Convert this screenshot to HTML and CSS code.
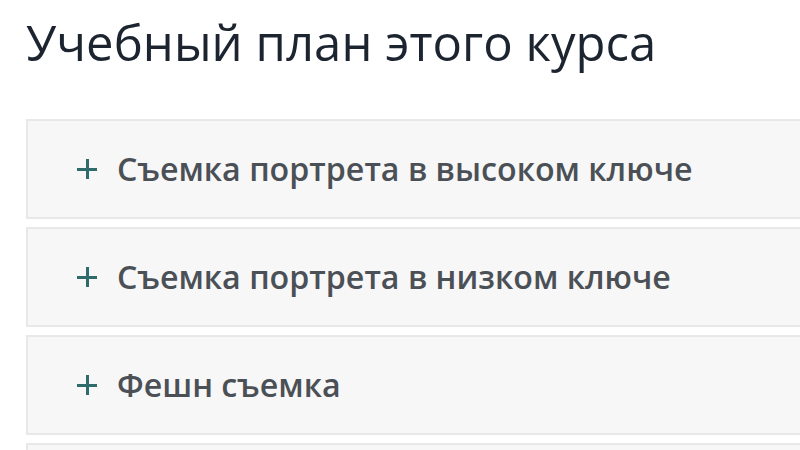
FILE: index.html
```html
<!DOCTYPE html>
<html lang="ru">
<head>
<meta charset="utf-8">
<link rel="stylesheet" href="styles.css">
</head>
<body>
<div class="page">
  <h1 class="title">Учебный план этого курса</h1>
  <div class="accordion">
    <div class="item"><span class="plus"></span><span class="label">Съемка портрета в высоком ключе</span></div>
    <div class="item"><span class="plus"></span><span class="label">Съемка портрета в низком ключе</span></div>
    <div class="item"><span class="plus"></span><span class="label">Фешн съемка</span></div>
    <div class="item"></div>
  </div>
</div>
</body>
</html>
```
FILE: styles.css
```css
html, body {
  margin: 0;
  padding: 0;
  background: #ffffff;
  overflow: hidden;
}
.page {
  width: 800px;
  height: 450px;
  overflow: hidden;
  padding: 0 0 0 26px;
  box-sizing: border-box;
  font-family: "Open Sans", "Noto Sans", sans-serif;
}
.title {
  margin: 0;
  padding-top: 12px;
  height: 119px;
  box-sizing: border-box;
  font-size: 49px;
  line-height: 60px;
  font-weight: 400;
  color: #1c2430;
  letter-spacing: 0.05px;
  white-space: nowrap;
}
.accordion {
  display: flex;
  flex-direction: column;
  gap: 8px;
  width: 820px;
}
.item {
  height: 100px;
  box-sizing: border-box;
  background: #f7f7f7;
  border: 2px solid #e8e8e8;
  display: flex;
  align-items: center;
  padding-left: 49px;
}
.plus {
  position: relative;
  width: 20px;
  height: 20px;
  margin-right: 20px;
  flex: none;
}
.plus::before, .plus::after {
  content: "";
  position: absolute;
  background: #2f6b6b;
}
.plus::before {
  left: 0; right: 0; top: 8.5px; height: 3px;
}
.plus::after {
  top: 0; bottom: 0; left: 8.5px; width: 3px;
}
.label {
  font-size: 32.2px;
  font-weight: 600;
  color: #4b5056;
  line-height: 1;
  white-space: nowrap;
}
```
